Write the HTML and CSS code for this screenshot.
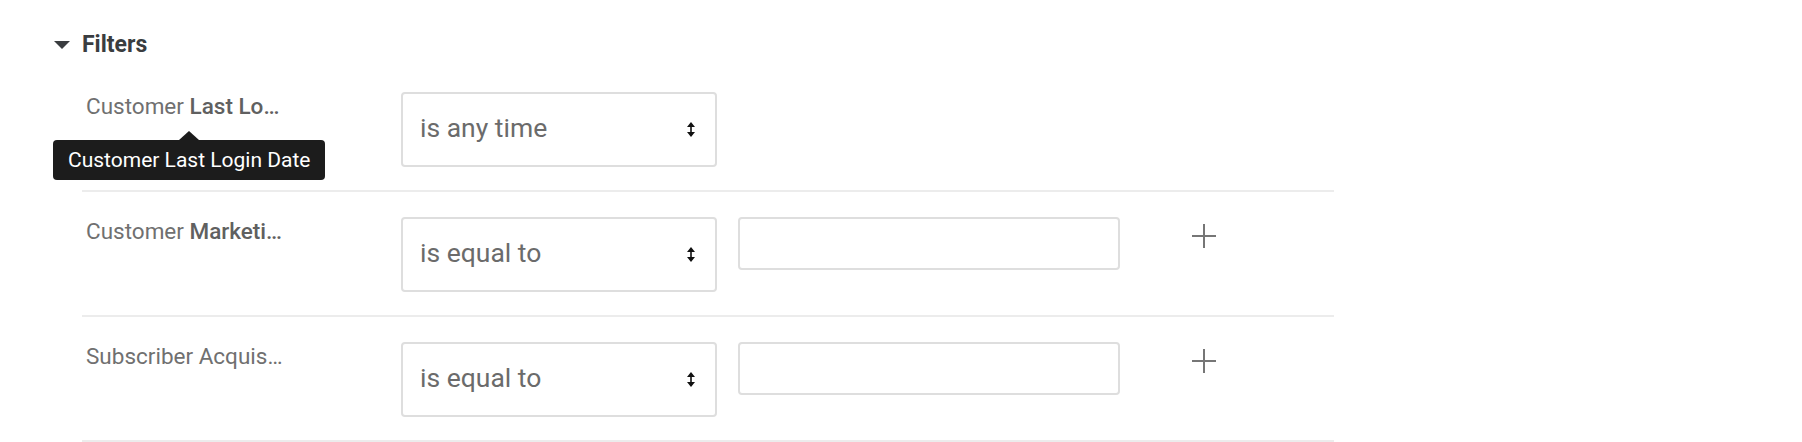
FILE: index.html
```html
<!DOCTYPE html>
<html>
<head>
<meta charset="utf-8">
<link rel="stylesheet" href="styles.css">
</head>
<body>
<div class="filters">
  <div class="filters-header">
    <svg class="caret" width="16" height="8" viewBox="0 0 16 8"><path d="M0 0 H16 L8 8 Z" fill="#3a3d40"/></svg>
    <span>Filters</span>
  </div>
  <div class="rows">
    <div class="row">
      <div class="label">Customer <b>Last Lo…</b>
        <div class="tooltip">Customer Last Login Date</div>
      </div>
      <div class="select"><span>is any time</span>
        <svg class="arrows" width="8" height="15" viewBox="0 0 8 15"><path d="M4 0 L8 5 H0 Z M4 15 L0 10 H8 Z" fill="#111"/><rect x="3.2" y="4" width="1.6" height="7" fill="#111"/></svg>
      </div>
    </div>
    <div class="row">
      <div class="label">Customer <b>Marketi…</b></div>
      <div class="select"><span>is equal to</span>
        <svg class="arrows" width="8" height="15" viewBox="0 0 8 15"><path d="M4 0 L8 5 H0 Z M4 15 L0 10 H8 Z" fill="#111"/><rect x="3.2" y="4" width="1.6" height="7" fill="#111"/></svg>
      </div>
      <div class="input"></div>
      <svg class="plus" width="24" height="24" viewBox="0 0 24 24"><path d="M12 0 V24 M0 12 H24" stroke="#767676" stroke-width="2"/></svg>
    </div>
    <div class="row">
      <div class="label">Subscriber Acquis…</div>
      <div class="select"><span>is equal to</span>
        <svg class="arrows" width="8" height="15" viewBox="0 0 8 15"><path d="M4 0 L8 5 H0 Z M4 15 L0 10 H8 Z" fill="#111"/><rect x="3.2" y="4" width="1.6" height="7" fill="#111"/></svg>
      </div>
      <div class="input"></div>
      <svg class="plus" width="24" height="24" viewBox="0 0 24 24"><path d="M12 0 V24 M0 12 H24" stroke="#767676" stroke-width="2"/></svg>
    </div>
  </div>
</div>
</body>
</html>
```

FILE: styles.css
```css
html, body {
  margin: 0;
  padding: 0;
  background: #ffffff;
  font-family: Roboto, "Liberation Sans", Arial, sans-serif;
}

.filters {
  padding-top: 31px;
}

.filters-header {
  display: flex;
  align-items: center;
  padding-left: 54px;
  height: 27px;
  font-size: 23px;
  line-height: 27px;
  font-weight: 700;
  color: #3a3d40;
}

.caret {
  margin-right: 12px;
  margin-top: 1px;
}

.rows {
  margin-top: 9px;
  margin-left: 82px;
  width: 1252px;
}

.row {
  display: flex;
  align-items: flex-start;
  box-sizing: content-box;
  height: 98px;
  padding-top: 25px;
  border-bottom: 2px solid #ececec;
}

.label {
  position: relative;
  width: 315px;
  padding-left: 4px;
  margin-top: 1px;
  font-size: 22.5px;
  line-height: 26px;
  color: #707070;
  white-space: nowrap;
}

.label b {
  font-weight: 500;
  color: #606060;
}

.tooltip {
  position: absolute;
  left: -29px;
  top: 47px;
  height: 40px;
  padding: 0 15px;
  background: #1c1c1c;
  color: #ffffff;
  font-size: 21px;
  line-height: 40px;
  border-radius: 4px;
  z-index: 2;
}

.tooltip::before {
  content: "";
  position: absolute;
  left: 126px;
  top: -9px;
  border-left: 10px solid transparent;
  border-right: 10px solid transparent;
  border-bottom: 9px solid #1c1c1c;
}

.select {
  display: flex;
  align-items: center;
  justify-content: space-between;
  box-sizing: border-box;
  width: 316px;
  height: 75px;
  padding: 0 20px 0 17px;
  border: 2px solid #dedede;
  border-radius: 4px;
  font-size: 26.5px;
  color: #6b6b6b;
}

.select span {
  margin-top: -5px;
}

.input {
  box-sizing: border-box;
  width: 382px;
  height: 53px;
  margin-left: 21px;
  border: 2px solid #dedede;
  border-radius: 4px;
}

.plus {
  margin-left: 72px;
  margin-top: 7px;
}
```
